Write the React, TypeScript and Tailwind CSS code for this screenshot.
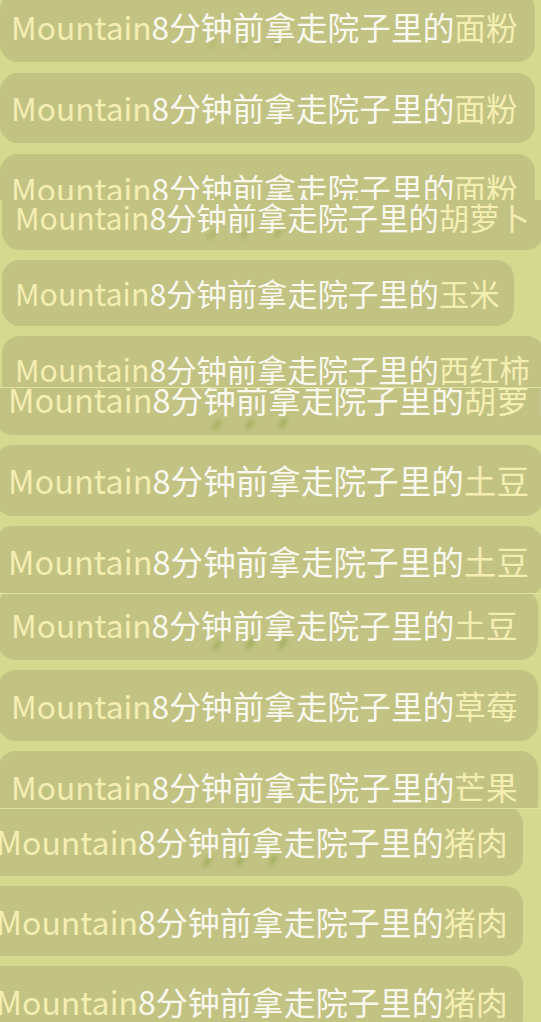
import React from "react";

type Segment = {
	box: string; // height of the strip
	list: string; // offsets of the card column inside the strip
	card: string; // card size / font / padding
	items: string[];
	smudge?: string; // where the faint green marks sit on the first card
	seam?: boolean;
};

const segments: Segment[] = [
	{
		box: "h-[200px]",
		list: "-mt-[8px] ml-0 gap-[11px]",
		card: "h-[70px] pl-[11px] pr-[17px] text-[31.7px]",
		items: ["面粉", "面粉", "面粉"],
		smudge: "left-[200px] top-[44px] opacity-25",
	},
	{
		box: "h-[187px]",
		list: "-mt-[16px] ml-[2px] gap-[10px]",
		card: "h-[66px] pl-[13px] pr-[14px] text-[30.3px]",
		items: ["胡萝卜", "玉米", "西红柿"],
		smudge: "left-[198px] top-[42px] opacity-40",
	},
	{
		box: "h-[206px]",
		list: "-mt-[24px] -ml-[5px] gap-[10px]",
		card: "h-[71px] pl-[13px] pr-[14px] text-[32.6px]",
		items: ["胡萝卜", "土豆", "土豆"],
		smudge: "left-[210px] top-[52px] opacity-60",
		seam: true,
	},
	{
		box: "h-[215px]",
		list: "-mt-[5px] -ml-[2px] gap-[10px]",
		card: "h-[71px] pl-[13px] pr-[20px] text-[31.7px]",
		items: ["土豆", "草莓", "芒果"],
		smudge: "left-[207px] top-[47px] opacity-60",
		seam: true,
	},
	{
		box: "h-[214px]",
		list: "-mt-[3px] -ml-[17px] gap-[10px]",
		card: "h-[70px] pl-[13px] pr-[15px] text-[32px]",
		items: ["猪肉", "猪肉", "猪肉"],
		smudge: "left-[212px] top-[47px] opacity-60",
		seam: true,
	},
];

function Smudge({ className }: { className: string }) {
	// three blurred green dashes showing through the card
	return (
		<svg
			className={`pointer-events-none absolute h-[16px] w-[90px] blur-[2px] ${className}`}
			viewBox="0 0 90 16"
		>
			<ellipse cx="12" cy="9" rx="2.5" ry="6.5" fill="#86a040" transform="rotate(35 12 9)" />
			<ellipse cx="45" cy="8" rx="2.5" ry="6.5" fill="#86a040" transform="rotate(35 45 8)" />
			<ellipse cx="78" cy="7" rx="2.5" ry="6.5" fill="#86a040" transform="rotate(35 78 7)" />
		</svg>
	);
}

function Notice({ item, className, smudge }: { item: string; className: string; smudge?: string }) {
	return (
		<div
			className={`relative flex w-fit shrink-0 items-center whitespace-nowrap rounded-[18px] bg-[#c2c283] leading-none ${className}`}
		>
			{smudge && <Smudge className={smudge} />}
			<span className="relative text-[#f5eeb3]">Mountain</span>
			<span className="relative text-[#f9f9f0]">8分钟前拿走院子里的</span>
			<span className="relative text-[#f5eeb3]">{item}</span>
		</div>
	);
}

export default function App() {
	return (
		<div
			className="h-[1022px] w-[541px] overflow-hidden bg-[#d4d98f]"
			style={{ fontFamily: '"Noto Sans CJK SC", "Noto Sans", sans-serif' }}
		>
			{segments.map((seg, i) => (
				<div
					key={i}
					className={`relative overflow-hidden ${seg.box} ${seg.seam ? "border-t border-[#dde2a0]" : ""}`}
				>
					<div className={`flex flex-col ${seg.list}`}>
						{seg.items.map((item, j) => (
							<Notice key={j} item={item} className={seg.card} smudge={j === 0 ? seg.smudge : undefined} />
						))}
					</div>
				</div>
			))}
		</div>
	);
}
